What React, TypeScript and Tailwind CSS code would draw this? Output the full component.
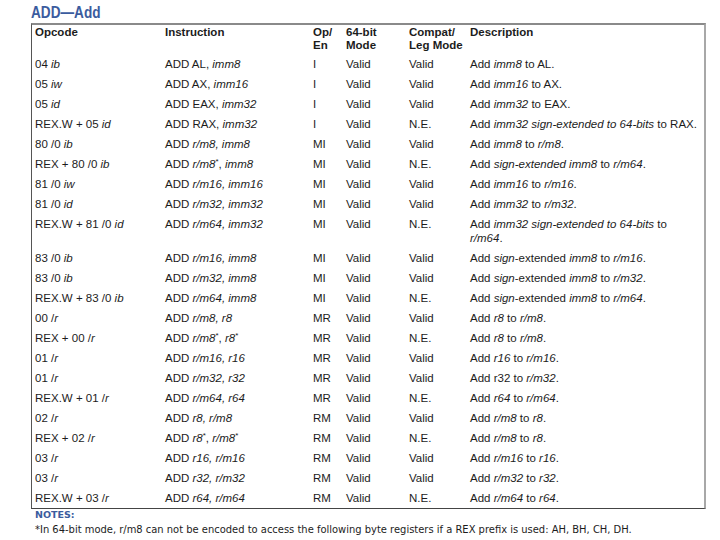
import React from "react";

const I = ({ children }: { children: React.ReactNode }) => <i className="italic">{children}</i>;
const Star = () => <span className="text-[8px] leading-[0] relative -top-[4px] not-italic">*</span>;

type Row = {
  op: React.ReactNode;
  ins: React.ReactNode;
  en: string;
  m64: string;
  cm: string;
  desc: React.ReactNode;
};

const rows: Row[] = [
  { op: <>04 <I>ib</I></>, ins: <>ADD AL, <I>imm8</I></>, en: "I", m64: "Valid", cm: "Valid", desc: <>Add <I>imm8</I> to AL.</> },
  { op: <>05 <I>iw</I></>, ins: <>ADD AX, <I>imm16</I></>, en: "I", m64: "Valid", cm: "Valid", desc: <>Add <I>imm16</I> to AX.</> },
  { op: <>05 <I>id</I></>, ins: <>ADD EAX, <I>imm32</I></>, en: "I", m64: "Valid", cm: "Valid", desc: <>Add <I>imm32</I> to EAX.</> },
  { op: <>REX.W + 05 <I>id</I></>, ins: <>ADD RAX, <I>imm32</I></>, en: "I", m64: "Valid", cm: "N.E.", desc: <>Add <I>imm32 sign-extended to 64-bits</I> to RAX.</> },
  { op: <>80 /0 <I>ib</I></>, ins: <>ADD <I>r/m8, imm8</I></>, en: "MI", m64: "Valid", cm: "Valid", desc: <>Add <I>imm8</I> to <I>r/m8</I>.</> },
  { op: <>REX + 80 /0 <I>ib</I></>, ins: <>ADD <I>r/m8</I><Star />, <I>imm8</I></>, en: "MI", m64: "Valid", cm: "N.E.", desc: <>Add <I>sign-extended imm8</I> to <I>r/m64</I>.</> },
  { op: <>81 /0 <I>iw</I></>, ins: <>ADD <I>r/m16, imm16</I></>, en: "MI", m64: "Valid", cm: "Valid", desc: <>Add <I>imm16</I> to <I>r/m16</I>.</> },
  { op: <>81 /0 <I>id</I></>, ins: <>ADD <I>r/m32, imm32</I></>, en: "MI", m64: "Valid", cm: "Valid", desc: <>Add <I>imm32</I> to <I>r/m32</I>.</> },
  { op: <>REX.W + 81 /0 <I>id</I></>, ins: <>ADD <I>r/m64, imm32</I></>, en: "MI", m64: "Valid", cm: "N.E.", desc: <>Add <I>imm32 sign-extended to 64-bits</I> to<br /><I>r/m64</I>.</> },
  { op: <>83 /0 <I>ib</I></>, ins: <>ADD <I>r/m16, imm8</I></>, en: "MI", m64: "Valid", cm: "Valid", desc: <>Add <I>sign</I>-extended <I>imm8</I> to <I>r/m16</I>.</> },
  { op: <>83 /0 <I>ib</I></>, ins: <>ADD <I>r/m32, imm8</I></>, en: "MI", m64: "Valid", cm: "Valid", desc: <>Add <I>sign</I>-extended <I>imm8</I> to <I>r/m32</I>.</> },
  { op: <>REX.W + 83 /0 <I>ib</I></>, ins: <>ADD <I>r/m64, imm8</I></>, en: "MI", m64: "Valid", cm: "N.E.", desc: <>Add <I>sign</I>-extended <I>imm8</I> to <I>r/m64</I>.</> },
  { op: <>00 /<I>r</I></>, ins: <>ADD <I>r/m8, r8</I></>, en: "MR", m64: "Valid", cm: "Valid", desc: <>Add <I>r8</I> to <I>r/m8</I>.</> },
  { op: <>REX + 00 /<I>r</I></>, ins: <>ADD <I>r/m8</I><Star />, <I>r8</I><Star /></>, en: "MR", m64: "Valid", cm: "N.E.", desc: <>Add <I>r8</I> to <I>r/m8</I>.</> },
  { op: <>01 /<I>r</I></>, ins: <>ADD <I>r/m16, r16</I></>, en: "MR", m64: "Valid", cm: "Valid", desc: <>Add <I>r16</I> to <I>r/m16</I>.</> },
  { op: <>01 /<I>r</I></>, ins: <>ADD <I>r/m32, r32</I></>, en: "MR", m64: "Valid", cm: "Valid", desc: <>Add r32 to <I>r/m32</I>.</> },
  { op: <>REX.W + 01 /<I>r</I></>, ins: <>ADD <I>r/m64, r64</I></>, en: "MR", m64: "Valid", cm: "N.E.", desc: <>Add <I>r64</I> to <I>r/m64</I>.</> },
  { op: <>02 /<I>r</I></>, ins: <>ADD <I>r8, r/m8</I></>, en: "RM", m64: "Valid", cm: "Valid", desc: <>Add <I>r/m8</I> to <I>r8</I>.</> },
  { op: <>REX + 02 /<I>r</I></>, ins: <>ADD <I>r8</I><Star />, <I>r/m8</I><Star /></>, en: "RM", m64: "Valid", cm: "N.E.", desc: <>Add <I>r/m8</I> to <I>r8</I>.</> },
  { op: <>03 /<I>r</I></>, ins: <>ADD <I>r16, r/m16</I></>, en: "RM", m64: "Valid", cm: "Valid", desc: <>Add <I>r/m16</I> to <I>r16</I>.</> },
  { op: <>03 /<I>r</I></>, ins: <>ADD <I>r32, r/m32</I></>, en: "RM", m64: "Valid", cm: "Valid", desc: <>Add <I>r/m32</I> to <I>r32</I>.</> },
  { op: <>REX.W + 03 /<I>r</I></>, ins: <>ADD <I>r64, r/m64</I></>, en: "RM", m64: "Valid", cm: "N.E.", desc: <>Add <I>r/m64</I> to <I>r64</I>.</> },
];

const grid = "grid grid-cols-[130px_148px_33px_63px_61px_1fr] pl-[3px]";

export default function App() {
  return (
    <div className="w-[720px] h-[540px] bg-white overflow-hidden text-[#1c1c1c] font-['Liberation_Sans',Arial,sans-serif]">
      <div className="pl-[31px] pt-[4px] h-[23px]">
        <div className="text-[17px] leading-[17px] font-bold text-[#3b5c9e] origin-left scale-x-[0.8] whitespace-nowrap">
          ADD—Add
        </div>
      </div>
      <div className="ml-[31px] w-[675px] border-l border-l-[#555] border-t-2 border-t-[#8a8a8a] border-r-2 border-r-[#a8a8a8] border-b border-b-[#444] text-[11.5px]">
        <div className={`${grid} pt-[1px] pb-[2px] leading-[13px] font-bold`}>
          <div>Opcode</div>
          <div>Instruction</div>
          <div>Op/<br />En</div>
          <div>64-bit<br />Mode</div>
          <div>Compat/<br />Leg Mode</div>
          <div>Description</div>
        </div>
        {rows.map((r, i) => (
          <div key={i} className={`${grid} py-[3px] leading-[14px]`}>
            <div className="whitespace-nowrap">{r.op}</div>
            <div className="whitespace-nowrap">{r.ins}</div>
            <div>{r.en}</div>
            <div>{r.m64}</div>
            <div>{r.cm}</div>
            <div className="whitespace-nowrap">{r.desc}</div>
          </div>
        ))}
      </div>
      <div className="pl-[35px] text-[9.5px] leading-[12px] font-bold text-[#3b5c9e] font-['DejaVu_Sans',sans-serif]">
        NOTES:
      </div>
      <div className="pl-[35px] pt-[2px] text-[9.95px] leading-[13px] font-['DejaVu_Sans',sans-serif] whitespace-nowrap">
        *In 64-bit mode, r/m8 can not be encoded to access the following byte registers if a REX prefix is used: AH, BH, CH, DH.
      </div>
    </div>
  );
}
